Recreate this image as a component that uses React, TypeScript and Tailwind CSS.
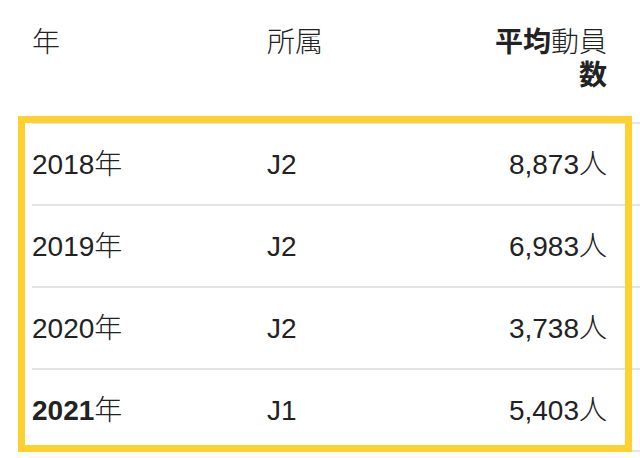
import React from "react";

const rows = [
  { year: "2018", bold: false, league: "J2", count: "8,873" },
  { year: "2019", bold: false, league: "J2", count: "6,983" },
  { year: "2020", bold: false, league: "J2", count: "3,738" },
  { year: "2021", bold: true, league: "J1", count: "5,403" },
];

export default function App() {
  return (
    <div
      className="relative w-[640px] h-[458px] overflow-hidden bg-white text-[#222222] text-[28px] leading-[33px]"
      style={{ fontFamily: '"Liberation Sans", "Noto Sans CJK JP", sans-serif' }}
    >
      <div className="pl-[32px] w-[640px]">
        {/* header */}
        <div className="flex h-[124px] border-b-2 border-[#e4e4e4] pt-[26px]">
          <div className="w-[235px] shrink-0 font-light">年</div>
          <div className="w-[150px] shrink-0 font-light">所属</div>
          <div className="flex-1 flex justify-end pr-[33px]">
            <div className="w-[130px] text-right">
              <span className="font-bold">平均</span>
              <span className="font-light">動員</span>
              <span className="font-bold">数</span>
            </div>
          </div>
        </div>
        {/* body */}
        <div className="relative">
          {rows.map((r) => (
            <div
              key={r.year}
              className="flex items-center h-[82px] border-b-2 border-[#e4e4e4]"
            >
              <div className="w-[235px] shrink-0">
                <span className={r.bold ? "font-bold" : ""}>{r.year}</span>
                <span className="font-light">年</span>
              </div>
              <div className="w-[150px] shrink-0">{r.league}</div>
              <div className="flex-1 text-right pr-[33px]">
                {r.count}
                <span className="font-light">人</span>
              </div>
            </div>
          ))}
          <div className="pointer-events-none absolute left-[-14px] top-[-8px] w-[614px] h-[336px] border-[7px] border-[#FFD12F]" />
        </div>
      </div>
    </div>
  );
}
